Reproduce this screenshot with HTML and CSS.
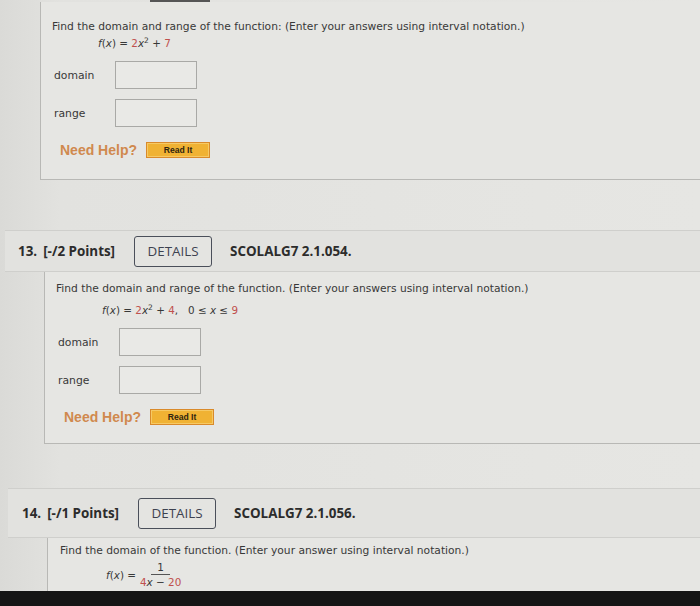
FILE: index.html
```html
<!DOCTYPE html>
<html lang="en">
<head>
<meta charset="UTF-8">
<title>Homework</title>
<link rel="stylesheet" href="styles.css">
</head>
<body>
<div class="page">
    <div class="topbar"></div>
    <div class="qbody first">
        <p class="prompt">Find the domain and range of the function: (Enter your answers using interval notation.)</p>
        <p class="formula"><i>f</i>(<i>x</i>) = <span class="red">2</span><i>x</i><sup>2</sup> + <span class="red">7</span></p>
        <div class="answer">
            <label>domain</label>
            <div class="box"></div>
        </div>
        <div class="answer">
            <label>range</label>
            <div class="box"></div>
        </div>
        <div class="help">
            <span class="need">Need Help?</span>
            <span class="readit">Read It</span>
        </div>
    </div>

    <div class="qhead">
        <span class="num">13.</span>
        <span class="pts">[-/2 Points]</span>
        <span class="details">DETAILS</span>
        <span class="code">SCOLALG7 2.1.054.</span>
    </div>
    <div class="qbody second">
        <p class="prompt">Find the domain and range of the function. (Enter your answers using interval notation.)</p>
        <p class="formula"><i>f</i>(<i>x</i>) = <span class="red">2</span><i>x</i><sup>2</sup> + <span class="red">4</span>, &nbsp; 0 &le; <i>x</i> &le; <span class="red">9</span></p>
        <div class="answer">
            <label>domain</label>
            <div class="box"></div>
        </div>
        <div class="answer">
            <label>range</label>
            <div class="box"></div>
        </div>
        <div class="help">
            <span class="need">Need Help?</span>
            <span class="readit">Read It</span>
        </div>
    </div>

    <div class="qhead tall">
        <span class="num">14.</span>
        <span class="pts">[-/1 Points]</span>
        <span class="details">DETAILS</span>
        <span class="code">SCOLALG7 2.1.056.</span>
    </div>
    <div class="qbody third">
        <p class="prompt">Find the domain of the function. (Enter your answer using interval notation.)</p>
        <div class="formula frac-line">
            <span><i>f</i>(<i>x</i>) =</span>
            <span class="frac">
                <span class="top">1</span>
                <span class="bottom"><span class="red">4</span><i>x</i> &minus; <span class="red">20</span></span>
            </span>
        </div>
    </div>
</div>
<div class="screen-edge"></div>
</body>
</html>
```

FILE: styles.css
```css
html, body {
    margin: 0;
    padding: 0;
    height: 606px;
    overflow: hidden;
}
body {
    font-family: "DejaVu Sans", Verdana, sans-serif;
    background-color: #dcdcd8;
    color: #383838;
    display: flex;
    flex-direction: column;
}
.page {
    flex: 1;
    min-height: 0;
    overflow: hidden;
    background: linear-gradient(90deg, #dadad7 0, #e2e2df 60px, #e6e6e3 100%);
}
.topbar {
    height: 2px;
    margin-left: 150px;
    width: 60px;
    background-color: #555;
}
p {
    margin: 0;
}
.qbody {
    border-left: 1px solid #b8b8b5;
    border-bottom: 1px solid #b8b8b5;
    background-color: #e6e6e3;
}
.qbody.first {
    margin-left: 40px;
    padding: 17px 0 21px 11px;
}
.qbody.second {
    margin-left: 44px;
    padding: 9px 0 18px 11px;
}
.qbody.third {
    margin-left: 47px;
    padding: 5px 0 0 12px;
    border-bottom: none;
    height: 60px;
}
.prompt {
    font-size: 10.7px;
    line-height: 16px;
}
.formula {
    font-size: 10.4px;
    line-height: 16px;
    margin-left: 46px;
}
.second .formula {
    margin-top: 5px;
}
.formula sup {
    font-size: 7.5px;
    line-height: 0;
}
.red {
    color: #c0504d;
}
.answer {
    display: flex;
    align-items: center;
    margin-top: 10px;
}
.answer label {
    width: 61px;
    margin-left: 2px;
    font-size: 10.8px;
}
.box {
    width: 80px;
    height: 26px;
    border: 1px solid #a9a9a6;
    background-color: #e9e9e6;
}
.help {
    display: flex;
    align-items: center;
    margin-top: 15px;
    margin-left: 8px;
}
.need {
    font-family: "Liberation Sans", Arial, sans-serif;
    font-weight: bold;
    font-size: 14px;
    color: #d0894e;
    margin-right: 9px;
}
.readit {
    width: 62px;
    height: 14px;
    line-height: 14px;
    text-align: center;
    font-family: "Liberation Sans", Arial, sans-serif;
    font-weight: bold;
    font-size: 8.6px;
    color: #2e2410;
    background-color: #f0b233;
    border: 1px solid #d98a2a;
    box-shadow: inset 0 0 0 1px #f6c964;
}
.qhead {
    margin-top: 50px;
    margin-left: 5px;
    height: 40px;
    display: flex;
    align-items: center;
    padding-left: 13px;
    background-color: #e2e2df;
    border-top: 1px solid #cfcfcc;
    border-bottom: 1px solid #cfcfcc;
    font-family: "Open Sans", sans-serif;
    font-size: 13.4px;
    color: #2c2c2c;
}
.qhead.tall {
    margin-top: 44px;
    margin-left: 8px;
    height: 48px;
    padding-left: 14px;
}
.num, .pts, .code {
    font-weight: bold;
}
.num {
    margin-right: 6px;
}
.pts {
    margin-right: 17px;
}
.details {
    width: 76px;
    height: 29px;
    line-height: 29px;
    text-align: center;
    border: 1.5px solid #4a4f5a;
    border-radius: 3px;
    color: #3d4250;
    background-color: #e4e4e1;
    margin-left: 2px;
    margin-right: 18px;
}
.frac-line {
    display: flex;
    align-items: center;
    margin-top: 1px;
}
.frac {
    display: inline-flex;
    flex-direction: column;
    align-items: center;
    margin-left: 4px;
    line-height: 14px;
}
.frac .top {
    padding: 0 6px;
    border-bottom: 1px solid #555;
}
.screen-edge {
    height: 15px;
    flex-shrink: 0;
    background-color: #151515;
}
```
